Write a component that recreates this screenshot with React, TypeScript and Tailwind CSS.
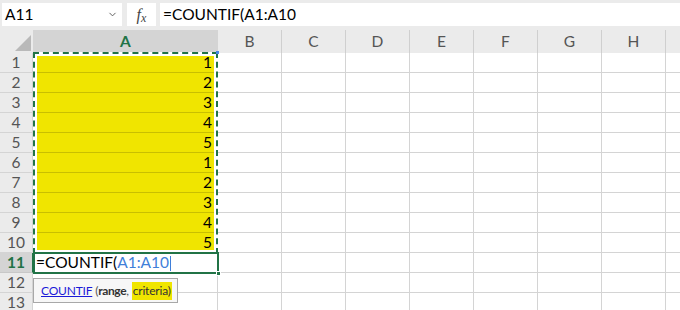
import React from 'react';
import { ChevronDown } from 'lucide-react';

const cols = ['B', 'C', 'D', 'E', 'F', 'G', 'H'];
const values = [1, 2, 3, 4, 5, 1, 2, 3, 4, 5];

const font = { fontFamily: 'Lato, "Open Sans", sans-serif' };

const App: React.FC = () => {
  return (
    <div className="w-[680px] h-[310px] overflow-hidden bg-white relative text-[15.5px] text-black" style={font}>
      {/* formula bar */}
      <div className="h-[30px] bg-[#ebebeb] flex items-start pt-[3px] pl-[2px]">
        <div className="w-[120px] h-[23px] bg-white flex items-center pl-[3px] pr-[4px]">
          <span className="flex-1">A11</span>
          <ChevronDown size={11} strokeWidth={2} className="text-[#555]" />
        </div>
        <div className="ml-[5px] w-[29px] h-[23px] bg-white flex items-center justify-center">
          <span className="italic text-[#444] text-[16px] font-['Liberation_Serif',serif]">
            f<span className="text-[12px] relative top-[2px]">x</span>
          </span>
        </div>
        <div className="ml-[4px] flex-1 h-[23px] bg-white flex items-center pl-[3px]">=COUNTIF(A1:A10</div>
      </div>

      {/* column headers */}
      <div className="h-[23px] bg-[#ebebeb] flex">
        <div className="w-[33px] h-full relative">
          <div className="absolute right-[2px] bottom-[2px] w-0 h-0 border-l-[16px] border-l-transparent border-b-[16px] border-b-[#b9b9b9]" />
        </div>
        <div className="w-[185px] h-full bg-[#d4d4d4] flex items-center justify-center font-bold text-[#217346]">A</div>
        {cols.map((c) => (
          <div key={c} className="w-[64px] h-full flex items-center justify-center text-[#555] border-r border-[#cfcfcf]">
            {c}
          </div>
        ))}
        <div className="flex-1" />
      </div>

      {/* rows */}
      {Array.from({ length: 13 }, (_, i) => i + 1).map((r) => {
        const active = r === 11;
        const filled = r <= 10;
        return (
          <div key={r} className="h-[20px] flex">
            <div
              className={`w-[33px] h-full flex items-center justify-center border-b border-r ${
                active
                  ? 'bg-[#d4d4d4] text-[#217346] font-bold border-b-[#c8c8c8] border-r-[#217346]'
                  : 'bg-[#ebebeb] text-[#555] border-[#d4d4d4]'
              }`}
            >
              {r}
            </div>
            <div
              className={`w-[185px] h-full flex items-center justify-end pr-[5px] border-b border-r ${
                filled ? 'bg-[#f0e500] border-b-[#c9bf00] border-r-[#d4d4d4]' : 'border-[#d4d4d4]'
              }`}
            >
              {filled ? values[r - 1] : ''}
            </div>
            {cols.map((c) => (
              <div key={c} className="w-[64px] h-full border-b border-r border-[#d4d4d4]" />
            ))}
            <div className="flex-1 h-full border-b border-[#d4d4d4]" />
          </div>
        );
      })}

      {/* copy range marching ants */}
      <div className="absolute left-[33px] top-[52px] w-[185px] h-[202px] border-[4px] border-white pointer-events-none">
        <div className="absolute -inset-[4px] border-2 border-dashed border-[#217346]" />
      </div>
      <div className="absolute left-[216px] top-[51px] w-[3px] h-[3px] bg-[#4a86e8]" />
      <div className="absolute left-[216px] top-[252px] w-[3px] h-[3px] bg-[#4a86e8]" />

      {/* editing cell */}
      <div className="absolute left-[33px] top-[252px] w-[186px] h-[22px] border-2 border-[#217346] bg-white flex items-center pl-[1px]">
        <span>=COUNTIF(</span>
        <span className="text-[#3f7fd9]">A1:A10</span>
        <span className="w-px h-[15px] bg-[#3f7fd9] ml-px" />
      </div>
      <div className="absolute left-[216px] top-[271px] w-[5px] h-[5px] bg-[#217346] border border-white" />

      {/* function tooltip */}
      <div className="absolute left-[33px] top-[278px] w-[145px] h-[25px] bg-[#f7f7f7] border border-[#a8a8a8] flex items-center pl-[7px] text-[12px] text-[#555] tracking-[-0.2px]">
        <span className="text-[#1a1ad8] underline">COUNTIF</span>
        <span className="ml-[3px]">(</span>
        <span className="font-bold text-[#333] tracking-[-0.4px]">range</span>
        <span>,</span>
        <span className="ml-[3px] bg-[#f0e500] px-[1px] text-[#333]">criteria)</span>
      </div>
    </div>
  );
};

export default App;
